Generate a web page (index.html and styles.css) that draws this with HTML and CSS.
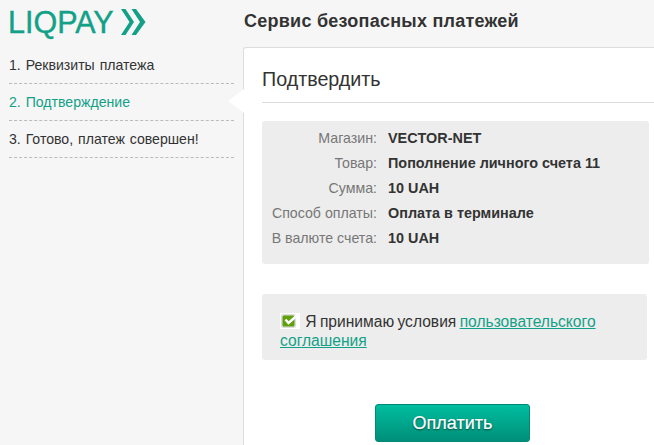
FILE: index.html
```html
<!DOCTYPE html>
<html lang="ru">
<head>
    <meta charset="UTF-8">
    <title>LiqPay - Подтвердить</title>
    <link rel="stylesheet" href="styles.css">
</head>
<body>
    <div class="header">
        <div class="logo">
            <span class="logo-text">LIQPAY</span>
            <svg class="logo-arrows" width="26" height="28" viewBox="0 0 26 28">
                <path d="M1 1 L5.5 1 L14 14 L5.5 27 L1 27 L9.5 14 Z" fill="#12a187"/>
                <path d="M11.5 1 L16 1 L25.5 14 L16 27 L11.5 27 L20 14 Z" fill="#12a187"/>
            </svg>
        </div>
        <h1>Сервис безопасных платежей</h1>
    </div>
    <div class="content">
        <ul class="steps">
            <li>1. Реквизиты платежа</li>
            <li class="active">2. Подтверждение</li>
            <li>3. Готово, платеж совершен!</li>
        </ul>
        <div class="panel">
            <span class="panel-arrow"></span>
            <h2>Подтвердить</h2>
            <div class="details">
                <div class="row"><span class="label">Магазин:</span><span class="value">VECTOR-NET</span></div>
                <div class="row"><span class="label">Товар:</span><span class="value">Пополнение личного счета 11</span></div>
                <div class="row"><span class="label">Сумма:</span><span class="value">10 UAH</span></div>
                <div class="row"><span class="label">Способ оплаты:</span><span class="value">Оплата в терминале</span></div>
                <div class="row"><span class="label">В валюте счета:</span><span class="value">10 UAH</span></div>
            </div>
            <div class="terms">
                <svg class="check" width="20" height="16" viewBox="0 0 20 16">
                    <rect width="20" height="16" fill="#fff"/>
                    <rect x="1" y="1" width="15" height="14" rx="2.5" fill="#dcdcdc"/>
                    <rect x="2.5" y="2.5" width="12" height="11" rx="1.5" fill="#5fa00c"/>
                    <path d="M5.5 6.5 L8.5 10 L17 2.5" fill="none" stroke="#fff" stroke-width="2.4"/>
                </svg>
                Я принимаю условия <a href="#">пользовательского соглашения</a>
            </div>
            <div class="actions">
                <button>Оплатить</button>
            </div>
        </div>
    </div>
</body>
</html>
```

FILE: styles.css
```css
html, body {
    height: 100%;
}

body {
    margin: 0;
    background: #f6f6f6;
    color: #333;
    font-family: "Liberation Sans", Arial, sans-serif;
    font-size: 14px;
    overflow: hidden;
}

.header {
    display: flex;
    align-items: center;
    height: 43px;
    padding-bottom: 4px;
}

.logo {
    display: flex;
    align-items: center;
    width: 244px;
    padding-left: 8px;
    box-sizing: border-box;
}

.logo-text {
    color: #12a187;
    font-size: 30.5px;
    line-height: 40px;
    width: 112px;
    -webkit-text-stroke: 0.4px #12a187;
}

.logo-arrows {
    display: block;
}

.header h1 {
    margin: 0;
    font-size: 18px;
    font-weight: bold;
    letter-spacing: 0.25px;
}

.content {
    display: flex;
    align-items: flex-start;
}

.steps {
    list-style: none;
    width: 225px;
    margin: 0 9px;
    padding: 0;
    flex: none;
    font-size: 14.1px;
    word-spacing: 1px;
}

.steps li {
    height: 36px;
    line-height: 36px;
    border-bottom: 1px dashed #bbb;
}

.steps .active {
    color: #12a187;
}

.panel {
    position: relative;
    flex: 1;
    height: 400px;
    padding: 0 0 0 18px;
    background: #fff;
    border-top: 1px solid #ddd;
    border-left: 1px solid #ddd;
    border-top-left-radius: 3px;
}

.panel-arrow {
    position: absolute;
    left: -16px;
    top: 41px;
    width: 16px;
    height: 24px;
    background: #fff;
    clip-path: polygon(100% 0, 0 50%, 100% 100%);
}

.panel h2 {
    margin: 0 0 18px;
    height: 54px;
    line-height: 62px;
    font-size: 19.7px;
    font-weight: normal;
    border-bottom: 1px solid #ddd;
}

.details {
    width: 387px;
    height: 143px;
    padding-top: 5px;
    box-sizing: border-box;
    background: #ededed;
    border-radius: 3px;
}

.row {
    display: flex;
    height: 25px;
    line-height: 25px;
}

.label {
    width: 115px;
    text-align: right;
    color: #777;
    font-size: 14.2px;
}

.value {
    margin-left: 11px;
    font-weight: bold;
    font-size: 14.4px;
}

.terms {
    width: 385px;
    height: 66px;
    margin-top: 30px;
    padding: 18px 10px 0 18px;
    box-sizing: border-box;
    background: #ededed;
    border-radius: 3px;
    font-size: 15.6px;
    line-height: 19px;
    word-spacing: -1px;
}

.check {
    vertical-align: -2px;
    margin-right: 2px;
}

.terms a {
    color: #12a187;
}

.actions {
    width: 381px;
    margin-top: 44px;
    text-align: center;
}

.actions button {
    width: 155px;
    height: 38px;
    padding: 0;
    border: 1px solid #00897a;
    border-radius: 3px;
    background: linear-gradient(to bottom, #00bd9f 0%, #008f78 100%);
    color: #fff;
    font-family: inherit;
    font-size: 18px;
    -webkit-text-stroke: 0.2px #fff;
    text-shadow: 0 1px 2px rgba(0, 0, 0, 0.6);
    cursor: pointer;
}
```
